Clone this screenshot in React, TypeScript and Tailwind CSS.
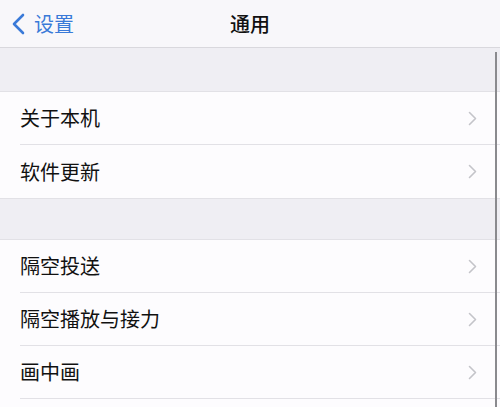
const font = { fontFamily: '"Noto Sans CJK SC", "Noto Sans", sans-serif' }

function Chevron() {
  return (
    <svg width="9" height="15" viewBox="0 0 9 15" fill="none" className="shrink-0">
      <path d="M1.5 1.5L7.5 7.5L1.5 13.5" stroke="#c4c4c9" strokeWidth="1.6" strokeLinecap="round" strokeLinejoin="round" />
    </svg>
  )
}

function Row({ label, last }: { label: string; last?: boolean }) {
  return (
    <div className="bg-[#fdfcfe] pl-5">
      <div className={`flex items-center justify-between h-[53px] pr-[23px] ${last ? '' : 'border-b border-[#e2e1e6]'}`}>
        <span className="text-[20px] text-[#111] leading-none">{label}</span>
        <Chevron />
      </div>
    </div>
  )
}

export default function App() {
  return (
    <div className="w-[500px] h-[407px] overflow-hidden bg-[#fdfcfe] relative" style={font}>
      {/* Nav bar */}
      <div className="h-[48px] bg-[#f8f7fa] border-b border-[#d9d8dd] flex items-center relative">
        <div className="flex items-center pl-[12px] gap-[9px]">
          <svg width="13" height="22" viewBox="0 0 13 22" fill="none">
            <path d="M11 2L2 11L11 20" stroke="#3a7ad8" strokeWidth="2.6" strokeLinecap="round" strokeLinejoin="round" />
          </svg>
          <span className="text-[20px] text-[#3a7ad8] leading-none">设置</span>
        </div>
        <span className="absolute left-1/2 -translate-x-1/2 text-[20px] font-medium text-[#111] leading-none">通用</span>
      </div>

      <div className="h-[44px] bg-[#efeef3] border-b border-[#e2e1e6]" />
      <Row label="关于本机" />
      <Row label="软件更新" last />
      <div className="h-[42px] bg-[#efeef3] border-y border-[#e2e1e6]" />
      <Row label="隔空投送" />
      <Row label="隔空播放与接力" />
      <Row label="画中画" />

      {/* scroll edge line */}
      <div className="absolute right-[3px] top-[52px] bottom-0 w-[2px] bg-[#8a8a8e]" />
    </div>
  )
}
